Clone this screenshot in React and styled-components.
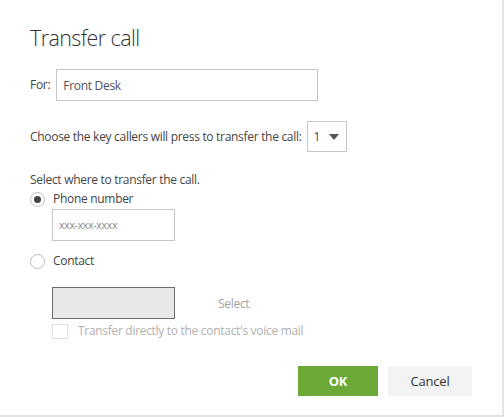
import React from "react";
import styled, { createGlobalStyle } from "styled-components";

const Global = createGlobalStyle`
  html, body { margin: 0; padding: 0; background: #fff; }
  body { font-family: "Open Sans", "Noto Sans", sans-serif; color: #333; }
  * { box-sizing: border-box; }
`;

const Dialog = styled.div`
  width: 504px;
  height: 417px;
  background: #fff;
  border-right: 2px solid #e3e3e3;
  border-bottom: 2px solid #e3e3e3;
  padding: 22px 30px 0 30px;
  display: flex;
  flex-direction: column;
  font-size: 12px;
  letter-spacing: -0.3px;
`;

const Title = styled.h1`
  margin: 0;
  font-size: 21.5px;
  line-height: 32px;
  font-weight: 300;
  letter-spacing: -0.6px;
  color: #333;
`;

const Row = styled.div`
  display: flex;
  align-items: center;
  gap: ${(p) => p.$gap || 6}px;
  margin-top: ${(p) => p.$mt || 0}px;
  margin-left: ${(p) => p.$ml || 0}px;
`;

const Label = styled.span`
  font-size: 12px;
  color: ${(p) => (p.$muted ? "#b0b0b0" : "#444")};
  line-height: 18px;
`;

const TextInput = styled.div`
  width: ${(p) => p.$w}px;
  height: ${(p) => p.$h}px;
  border: 1px solid #c6c6c6;
  display: flex;
  align-items: center;
  padding-left: 6px;
  font-size: ${(p) => (p.$small ? 10.5 : 12)}px;
  color: ${(p) => (p.$small ? "#8a8a8a" : "#50505e")};
`;

const Select = styled.div`
  width: 40px;
  height: 31px;
  border: 1px solid #c6c6c6;
  display: flex;
  align-items: center;
  justify-content: space-between;
  padding: 0 7px 0 6px;
  font-size: 12px;
  color: #44445a;
`;

const Text = styled.div`
  margin-top: ${(p) => p.$mt || 0}px;
  font-size: 12px;
  line-height: 18px;
  color: #444;
`;

const Radio = styled.span`
  width: 15px;
  height: 15px;
  border-radius: 50%;
  border: 1px solid #bdbdbd;
  display: flex;
  align-items: center;
  justify-content: center;
  flex: none;
  &::after {
    content: "";
    display: ${(p) => (p.$checked ? "block" : "none")};
    width: 7px;
    height: 7px;
    border-radius: 50%;
    background: #444;
  }
`;

const ContactBox = styled.div`
  width: 123px;
  height: 32px;
  background: #e8e8e8;
  border: 1px solid #6e6e6e;
`;

const LinkText = styled.span`
  font-size: 12px;
  color: #a0a0a0;
`;

const Checkbox = styled.span`
  width: 16px;
  height: 15px;
  border: 1px solid #e0e0e0;
  flex: none;
`;

const Footer = styled.div`
  display: flex;
  justify-content: flex-end;
  gap: 10px;
  margin-top: 26px;
`;

const Button = styled.button`
  width: ${(p) => p.$w}px;
  height: 30px;
  border: none;
  font-family: inherit;
  font-size: 13px;
  letter-spacing: -0.2px;
  font-weight: ${(p) => (p.$primary ? 700 : 400)};
  background: ${(p) => (p.$primary ? "#6aa935" : "#f3f3f3")};
  color: ${(p) => (p.$primary ? "#fff" : "#333")};
  padding: 0;
`;

export default function App() {
  return (
    <>
      <Global />
      <Dialog>
        <Title>Transfer call</Title>
        <Row $mt={15} $gap={6}>
          <Label>For:</Label>
          <TextInput $w={262} $h={32}>Front Desk</TextInput>
        </Row>
        <Row $mt={20} $gap={5}>
          <Label>Choose the key callers will press to transfer the call:</Label>
          <Select>
            <span>1</span>
            <svg width="10" height="6" viewBox="0 0 10 6">
              <path d="M0 0 L10 0 L5 6 Z" fill="#555" />
            </svg>
          </Select>
        </Row>
        <Text $mt={19}>Select where to transfer the call.</Text>
        <Row $gap={8} $mt={1}>
          <Radio $checked />
          <Label>Phone number</Label>
        </Row>
        <Row $ml={22} $mt={1}>
          <TextInput $w={123} $h={32} $small>xxx-xxx-xxxx</TextInput>
        </Row>
        <Row $gap={8} $mt={11}>
          <Radio />
          <Label>Contact</Label>
        </Row>
        <Row $ml={22} $mt={17} $gap={43}>
          <ContactBox />
          <LinkText>Select</LinkText>
        </Row>
        <Row $ml={22} $mt={3} $gap={10}>
          <Checkbox />
          <Label $muted>Transfer directly to the contact's voice mail</Label>
        </Row>
        <Footer>
          <Button $primary $w={80}>OK</Button>
          <Button $w={84}>Cancel</Button>
        </Footer>
      </Dialog>
    </>
  );
}
